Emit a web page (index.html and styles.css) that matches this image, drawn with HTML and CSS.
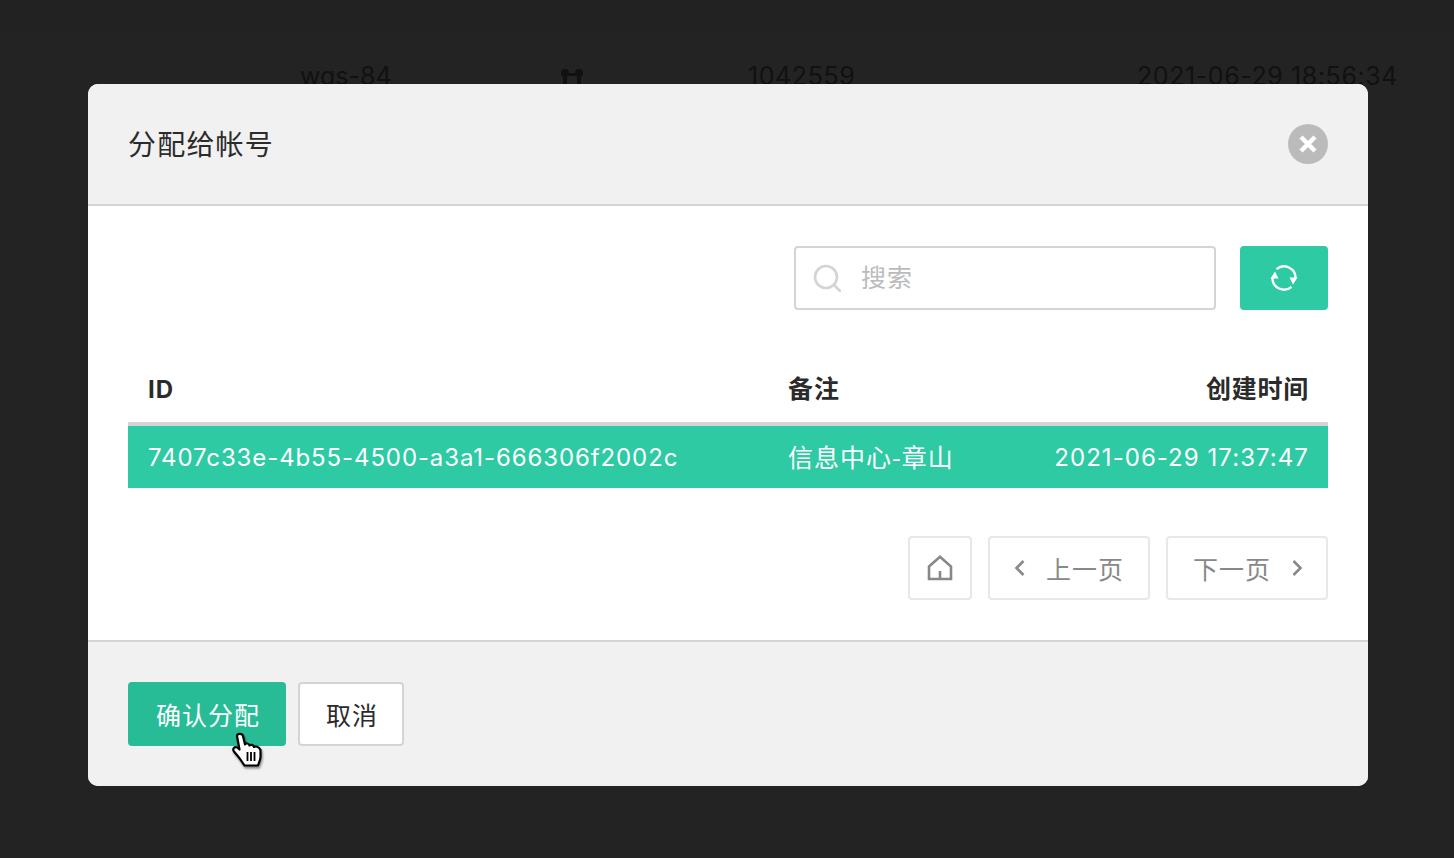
FILE: index.html
```html
<!DOCTYPE html>
<html lang="zh-CN">
<head>
<meta charset="utf-8">
<title>分配给帐号</title>
<link rel="stylesheet" href="styles.css">
</head>
<body>
<div class="page">
  <div class="topbar"></div>
  <div class="bg-row">
    <span class="bg-name">wqs-84</span>
    <svg class="bg-icon" width="24" height="24" viewBox="0 0 24 24"><circle cx="5" cy="9" r="4"/><circle cx="19" cy="9" r="4"/><path d="M5 9h14v3h-14zM3 12h4v12h-4zM17 12h4v12h-4z"/></svg>
    <span>1042559</span>
    <span class="bg-date">2021-06-29 18:56:34</span>
  </div>
</div>
<div class="modal">
  <header class="modal-head">
    <h1 class="modal-title">分配给帐号</h1>
    <button class="close" type="button" aria-label="关闭">
      <svg width="20" height="20" viewBox="0 0 20 20"><path d="M3 3l14 14M17 3L3 17" stroke="#fff" stroke-width="4.400" fill="none"/></svg>
    </button>
  </header>
  <section class="modal-body">
    <div class="toolbar">
      <label class="search">
        <svg class="search-icon" width="28" height="28" viewBox="0 0 28 28"><circle cx="13" cy="13" r="11" fill="none" stroke="#d4d4d4" stroke-width="2.600"/><path d="M21 21l6 6" stroke="#d4d4d4" stroke-width="2.600" stroke-linecap="round"/></svg>
        <span class="placeholder zh">搜索</span>
      </label>
      <button class="refresh" type="button" aria-label="刷新">
        <svg width="28" height="28" viewBox="0 0 28 28"><path d="M2.400 14A11.600 11.600 0 0 0 21.500 22.800M25.600 14A11.600 11.600 0 0 0 6.500 5.200" fill="none" stroke="#fff" stroke-width="2.400"/><path d="M5 7.500L0.500 14.500H8.500zM23 20.500L27.500 13.500H19.500z" fill="#fff"/></svg>
      </button>
    </div>
    <div class="table">
      <div class="tr th">
        <span>ID</span>
        <span class="zh">备注</span>
        <span class="right zh th-time">创建时间</span>
      </div>
      <div class="tr selected">
        <span class="uuid">7407c33e-4b55-4500-a3a1-666306f2002c</span>
        <span class="zh note">信息中心-章山</span>
        <span class="right date">2021-06-29 17:37:47</span>
      </div>
    </div>
    <nav class="pager">
      <button class="page-btn home" type="button" aria-label="首页">
        <svg width="26" height="26" viewBox="0 0 26 26"><path d="M2 11.500L13 1.800L24 11.500V24H2zM13 24V16" fill="none" stroke="#888" stroke-width="2.600"/></svg>
      </button>
      <button class="page-btn prev" type="button">
        <svg width="12" height="18" viewBox="0 0 12 18"><path d="M9.500 2l-7 7 7 7" fill="none" stroke="#888" stroke-width="2.600"/></svg>
        <span class="zh">上一页</span>
      </button>
      <button class="page-btn next" type="button">
        <span class="zh">下一页</span>
        <svg width="12" height="18" viewBox="0 0 12 18"><path d="M2.500 2l7 7-7 7" fill="none" stroke="#888" stroke-width="2.600"/></svg>
      </button>
    </nav>
  </section>
  <footer class="modal-foot">
    <button class="btn primary" type="button"><span class="zh">确认分配</span></button>
    <button class="btn" type="button"><span class="zh">取消</span></button>
  </footer>
  <svg class="cursor" width="36" height="42" viewBox="0 0 36 42"><path d="M8 6C8 3.500 13 3 14 6L16 14.500C16.500 13 20 13 20.500 15.500C21.500 14.500 24.500 14.500 25 17C26.500 16 30 16.500 31.500 20V27C31.500 30 30 32 29 35.500H15.500C13 31.500 10 27 5 21.500C3 19 5.500 16 8.500 17.500L10.500 19.500z" fill="#fff" stroke="#000" stroke-width="2.200" stroke-linejoin="round"/><path d="M18.500 22v9M22 22v9M25.500 22v9" stroke="#000" stroke-width="1.800" fill="none"/></svg>
</div>
</body>
</html>
```
FILE: styles.css
```css
* { box-sizing: border-box; }
html, body { margin: 0; height: 100%; }
body {
  background: #232323;
  font-family: Inter, "Noto Sans CJK SC", sans-serif;
  font-size: 24px;
  letter-spacing: 1px;
  color: #222;
  overflow: hidden;
}
button { font: inherit; letter-spacing: inherit; cursor: pointer; margin: 0; }
.zh { font-family: "Noto Sans CJK SC", sans-serif; font-size: 25px; line-height: 28px; }
.uuid { letter-spacing: .89px; }
.date { letter-spacing: 1.05px; }
.note { padding-bottom: 2px; }

.topbar { height: 32px; background: #222; border-bottom: 1px solid #212121; }
.bg-row {
  display: grid;
  grid-template-columns: 260px 188px 1fr auto;
  align-items: center;
  padding: 30px 56px 0 300px;
  color: #111;
  font-size: 25px;
  letter-spacing: .58px;
  line-height: 28px;
}
.bg-name { letter-spacing: 0; }
.bg-icon { fill: #111; }

.modal {
  position: fixed;
  left: 88px;
  top: 84px;
  width: 1280px;
  height: 702px;
  border-radius: 10px;
  overflow: hidden;
  background: #fff;
  display: flex;
  flex-direction: column;
}
.modal-head {
  height: 122px;
  flex: none;
  background: #f1f1f1;
  border-bottom: 2px solid #d4d4d4;
  padding: 0 40px;
  display: flex;
  align-items: center;
  justify-content: space-between;
}
.modal-title { margin: 0; padding-bottom: 2px; font-family: "Noto Sans CJK SC", sans-serif; font-size: 28px; letter-spacing: 1.2px; font-weight: 400; color: #2b2b2b; line-height: 40px; }
.close {
  width: 40px; height: 40px; border: 0; border-radius: 50%;
  background: #bbb; padding: 0;
  display: flex; align-items: center; justify-content: center;
}
.modal-body { flex: 1; padding: 40px 40px 0; }
.toolbar { display: flex; justify-content: flex-end; gap: 24px; height: 64px; }
.search {
  width: 422px; border: 2px solid #d4d4d4; border-radius: 4px;
  display: flex; align-items: center; gap: 20px; padding-left: 17px;
  background: #fff;
}
.placeholder { color: #bbb; padding-bottom: 4px; }
.refresh {
  width: 88px; border: 0; border-radius: 4px; background: #2dcaa3; padding: 0;
  display: flex; align-items: center; justify-content: center;
}
.table { margin-top: 50px; }
.tr {
  display: grid;
  grid-template-columns: 640px 1fr auto;
  align-items: center;
  padding: 0 20px;
  height: 62px;
}
.th { font-weight: 700; border-bottom: 4px solid #d4d4d4; height: 66px; color: #2b2b2b; padding-bottom: 4px; }
.th .zh { padding-bottom: 4px; }
.th .th-time { letter-spacing: .75px; }
.selected { background: #2dcaa3; color: #fff; }
.right { text-align: right; margin-right: -1px; }
.pager { display: flex; justify-content: flex-end; gap: 16px; margin-top: 48px; height: 64px; }
.page-btn {
  height: 64px; border: 2px solid #e8e8e8; border-radius: 4px; background: #fff; color: #888;
  display: flex; align-items: center; justify-content: center; padding: 0;
}
.home { width: 64px; }
.prev { width: 162px; gap: 20px; }
.next { width: 162px; gap: 20px; padding-left: 2px; }
.modal-foot {
  height: 146px; flex: none;
  background: #f1f1f1;
  border-top: 2px solid #d4d4d4;
  padding: 40px 40px 0;
  display: flex;
  gap: 12px;
  align-items: flex-start;
}
.btn {
  height: 64px; width: 106px; padding: 2px 0 0 2px;
  border: 2px solid #d4d4d4; border-radius: 4px;
  background: #fff; color: #2b2b2b;
}
.primary { width: 158px; background: #27bc96; border: 0; color: #fff; }
.cursor {
  position: absolute;
  left: 141px;
  top: 646px;
  filter: drop-shadow(1px 2px 1px rgba(0,0,0,.45));
}
```
